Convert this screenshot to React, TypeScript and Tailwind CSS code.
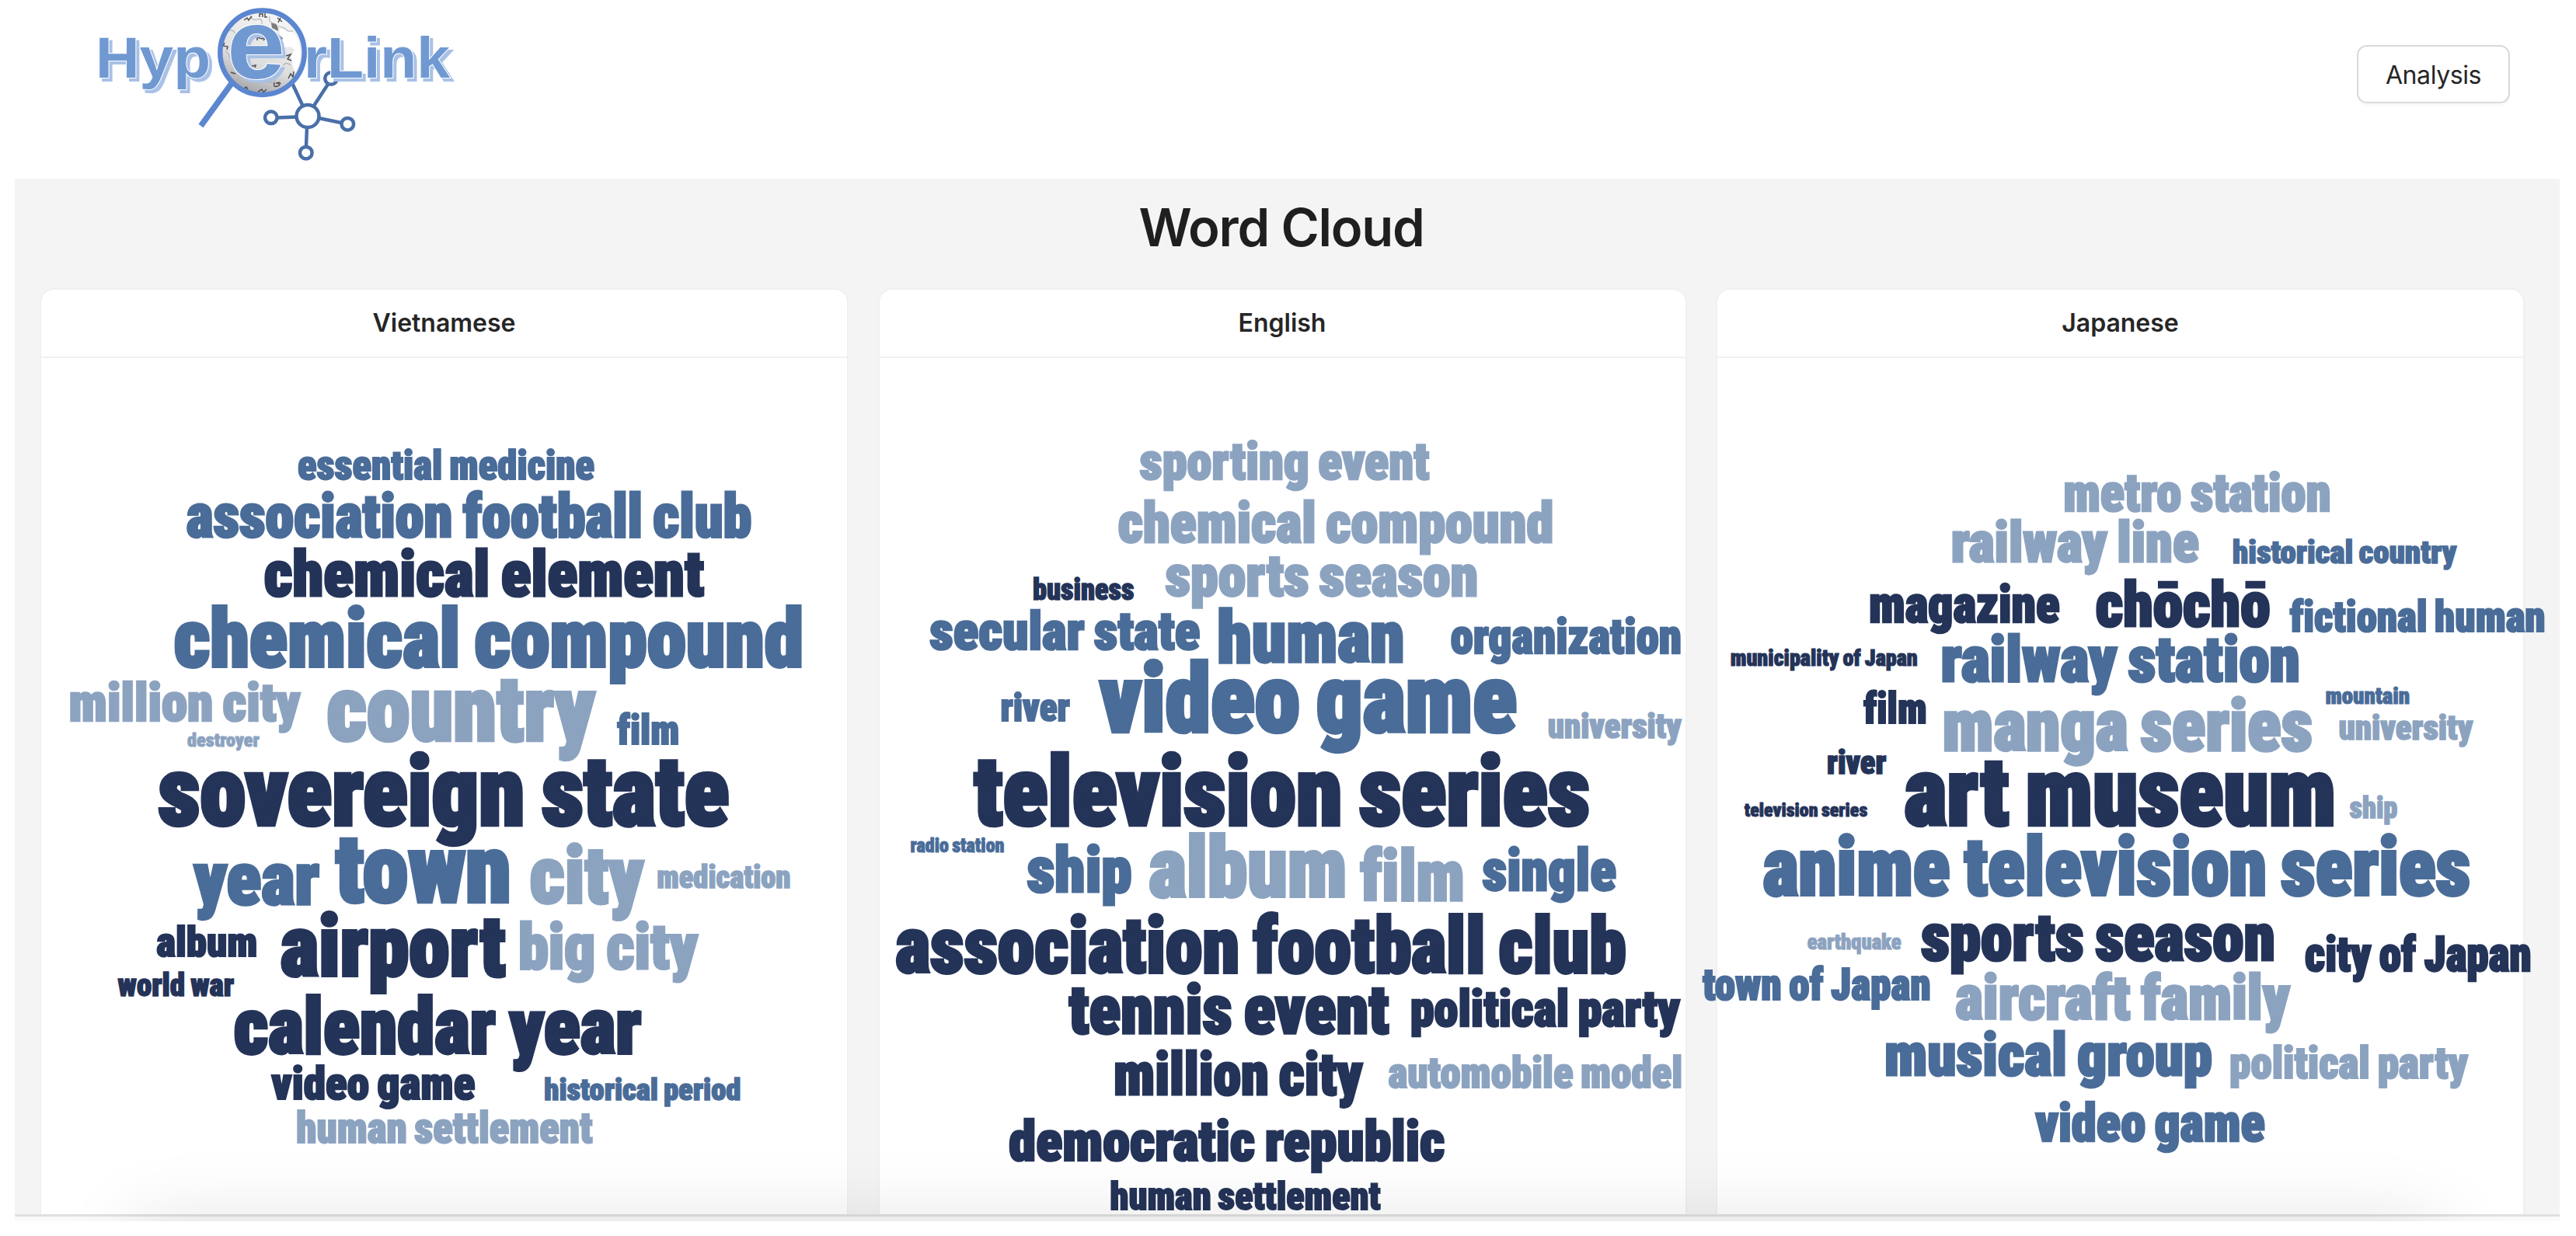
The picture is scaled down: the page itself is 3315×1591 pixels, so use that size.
type Tone = 'light' | 'mid' | 'dark';

type Word = {
  text: string;
  x: number;
  y: number;
  width: number;
  height: number;
  tone: Tone;
};

const tones: Record<Tone, string> = {
  light: '#8ca3c0',
  mid: '#4a6c98',
  dark: '#243358',
};

// [text, left, right, baseline, ascender height, tone]
type Row = [string, number, number, number, number, Tone];

const vietnamese: Row[] = [
  ['essential medicine', 383.6, 764.3, 617.1, 38, 'mid'],
  ['association football club', 240.7, 966.4, 691.7, 56.4, 'mid'],
  ['chemical element', 340.7, 905, 767.6, 59.4, 'dark'],
  ['chemical compound', 225, 1032.9, 859.5, 75.9, 'mid'],
  ['million city', 89.3, 385.7, 928.9, 50.3, 'light'],
  ['country', 422, 764.3, 954.5, 85, 'light'],
  ['film', 795, 873.6, 958.8, 39.5, 'mid'],
  ['destroyer', 241.4, 333.6, 961.4, 17.8, 'light'],
  ['sovereign state', 205, 937, 1062.8, 90.3, 'dark'],
  ['year', 250.7, 410, 1164.6, 68.5, 'mid'],
  ['town', 432.9, 656.4, 1162.6, 88.7, 'mid'],
  ['city', 682.9, 827, 1162.6, 74.4, 'light'],
  ['medication', 845.7, 1017, 1143.8, 29, 'light'],
  ['album', 202, 330.7, 1231.7, 39.7, 'dark'],
  ['airport', 362, 649.3, 1257, 80, 'dark'],
  ['big city', 667.9, 897, 1248, 60, 'light'],
  ['world war', 152, 300.7, 1282.8, 29.4, 'dark'],
  ['calendar year', 302, 824.3, 1357.2, 73.2, 'dark'],
  ['video game', 350, 610.7, 1416, 43, 'dark'],
  ['historical period', 700.7, 952.9, 1416, 28.6, 'mid'],
  ['human settlement', 382, 762, 1472, 40, 'light'],
];

const english: Row[] = [
  ['sporting event', 1466.9, 1838, 617.7, 49.3, 'light'],
  ['chemical compound', 1439, 1998, 698.3, 53, 'light'],
  ['sports season', 1500, 1900.7, 767.7, 54.2, 'light'],
  ['business', 1329, 1458.5, 772.3, 27.7, 'dark'],
  ['secular state', 1196.5, 1543, 836.7, 50.7, 'mid'],
  ['human', 1567, 1806, 853, 67.7, 'mid'],
  ['organization', 1867, 2162.8, 841.7, 46, 'mid'],
  ['video game', 1416, 1950, 943.3, 89.3, 'mid'],
  ['river', 1287.5, 1375.8, 929, 36.7, 'mid'],
  ['university', 1991.7, 2162.8, 950, 33, 'light'],
  ['television series', 1254, 2044, 1063, 90.7, 'dark'],
  ['radio station', 1171.4, 1291.7, 1097.6, 18.2, 'mid'],
  ['ship', 1322, 1455, 1148.5, 60, 'mid'],
  ['album', 1479, 1731.7, 1155.5, 78.3, 'light'],
  ['film', 1751, 1883, 1160.2, 66, 'light'],
  ['single', 1908, 2078.6, 1146.7, 54, 'mid'],
  ['association football club', 1153, 2091, 1252.7, 73.2, 'dark'],
  ['tennis event', 1375.8, 1786, 1331, 63.7, 'dark'],
  ['political party', 1815, 2160.7, 1321.9, 47.7, 'dark'],
  ['million city', 1433.5, 1752, 1410, 55.7, 'dark'],
  ['automobile model', 1786.7, 2164, 1401, 40.5, 'light'],
  ['democratic republic', 1298.7, 1858, 1495.2, 52.8, 'dark'],
  ['human settlement', 1428.7, 1775.5, 1557.5, 36, 'dark'],
];

const japanese: Row[] = [
  ['metro station', 2656, 2998.7, 659, 49.7, 'light'],
  ['railway line', 2511.5, 2829, 723.7, 53, 'light'],
  ['historical country', 2873.4, 3160.8, 725.7, 30.3, 'mid'],
  ['magazine', 2405.8, 2649.8, 802, 49.3, 'dark'],
  ['chōchō', 2697.6, 2920.5, 806.7, 58, 'dark'],
  ['fictional human', 2947.3, 3275, 813.7, 40.3, 'mid'],
  ['railway station', 2498.5, 2958.9, 878.3, 60, 'mid'],
  ['municipality of Japan', 2227, 2467.4, 857.7, 21.7, 'dark'],
  ['film', 2399, 2479, 931.3, 40.3, 'dark'],
  ['manga series', 2500.7, 2974.8, 966.7, 68.3, 'light'],
  ['mountain', 2992.9, 3100.7, 906, 22, 'mid'],
  ['university', 3010, 3181.8, 952.3, 33, 'light'],
  ['river', 2351.6, 2426.8, 996.3, 31.3, 'dark'],
  ['art museum', 2452, 3004.5, 1063.2, 89, 'dark'],
  ['television series', 2245, 2403, 1051.3, 18, 'dark'],
  ['ship', 3024, 3084.8, 1053.7, 27.7, 'light'],
  ['anime television series', 2269.8, 3178, 1153.5, 75.5, 'mid'],
  ['sports season', 2473, 2927, 1236.8, 62, 'dark'],
  ['city of Japan', 2966.8, 3257, 1250.5, 45.7, 'dark'],
  ['earthquake', 2326, 2446.4, 1222.7, 20.4, 'light'],
  ['town of Japan', 2191.6, 2484, 1287.4, 41.8, 'mid'],
  ['aircraft family', 2517.3, 2945.8, 1312.7, 58.7, 'light'],
  ['musical group', 2426, 2846, 1384.3, 55.8, 'mid'],
  ['political party', 2869.8, 3175.3, 1389, 42.2, 'light'],
  ['video game', 2620, 2914, 1470, 50, 'mid'],
];

const toWord = ([text, left, right, y, height, tone]: Row): Word => ({
  text,
  x: left,
  y,
  width: right - left,
  height,
  tone,
});

const clouds = [
  { title: 'Vietnamese', viewBox: '53 461 1037 1102', words: vietnamese.map(toWord) },
  { title: 'English', viewBox: '1131.5 461 1037 1102', words: english.map(toWord) },
  { title: 'Japanese', viewBox: '2210 461 1037 1102', words: japanese.map(toWord) },
];

export default function App() {
  return (
    <div className="h-[1591px] w-[3315px] overflow-hidden bg-white font-['Inter',sans-serif] text-[#1f1f1f]">
      <header className="flex h-[230px] items-start justify-between pl-[120px] pr-[85px]">
        <Logo />
        <button className="mt-[58px] h-[75px] w-[197px] rounded-[13px] border-2 border-[#d9d9d9] bg-white pt-[2px] text-[32px] tracking-[-0.4px] text-[#262626] shadow-[0_4px_0_rgba(0,0,0,0.02)]">
          Analysis
        </button>
      </header>

      <main className="relative ml-[19px] mr-[21px] flex h-[1342px] flex-col bg-[#f4f4f4]">
        <h1 className="h-[141px] pr-[15px] pt-[22px] text-center text-[67px] font-semibold leading-[82px] tracking-[-1.3px]">
          Word Cloud
        </h1>
        <div className="flex flex-1 gap-[37.5px] pl-8">
          {clouds.map((cloud) => (
            <CloudCard key={cloud.title} {...cloud} />
          ))}
        </div>
        <div className="h-[9px] border-t-[3px] border-[#e0e0e0] bg-[#fafafa]" />

        {/* soft shadow rising from the bottom edge */}
        <div className="pointer-events-none absolute inset-0 overflow-hidden">
          <div className="absolute left-[150px] right-[150px] top-full h-40 shadow-[0_0_100px_rgba(0,0,0,0.11)]" />
        </div>
      </main>
    </div>
  );
}

function CloudCard({ title, viewBox, words }: { title: string; viewBox: string; words: Word[] }) {
  return (
    <section className="flex w-[1041px] flex-col rounded-t-[18px] border-2 border-b-0 border-[#f0f0f0] bg-white">
      <h2 className="h-[88px] border-b-2 border-[#f0f0f0] text-center text-[32px] font-semibold leading-[85px] text-[#262626]">
        {title}
      </h2>
      <svg
        viewBox={viewBox}
        className="h-[1102px] w-full overflow-visible font-['Roboto_Condensed','Roboto',sans-serif] font-black [font-variant-ligatures:none]"
      >
        {words.map((w) => {
          const size = w.height * 1.37;
          return (
            <text
              key={w.text}
              x={w.x - size * 0.012}
              y={w.y - size * 0.01}
              textLength={w.width + size * 0.024}
              lengthAdjust="spacingAndGlyphs"
              fontSize={size}
              fill={tones[w.tone]}
              stroke={tones[w.tone]}
              strokeWidth={size * 0.038}
              wordSpacing={-size * 0.05}
            >
              {w.text}
            </text>
          );
        })}
      </svg>
    </section>
  );
}

function LogoText({ x, y = 100, size, width, children }: { x: number; y?: number; size: number; width: number; children: string }) {
  return (
    <text
      x={x}
      y={y}
      fontSize={size}
      textLength={width}
      lengthAdjust="spacingAndGlyphs"
      fill="#7099d2"
      stroke="#fff"
      strokeWidth="2"
      paintOrder="stroke"
      className="font-['Liberation_Sans',sans-serif] font-bold [filter:drop-shadow(4px_4px_0_#a9c1e6)]"
    >
      {children}
    </text>
  );
}

function Logo() {
  return (
    <svg viewBox="120 0 470 220" className="h-[220px] w-[470px]">
      <defs>
        <linearGradient id="globe" x1="0.7" y1="0.1" x2="0.35" y2="1">
          <stop offset="0" stopColor="#f4f4f4" />
          <stop offset="0.6" stopColor="#dededf" />
          <stop offset="1" stopColor="#a4a4a8" />
        </linearGradient>
      </defs>

      {/* network nodes */}
      <g fill="none" stroke="#4a6fa8" strokeWidth="4.5">
        <path d="M376 107 390 137M404 136 423 107M357 151.500 382 150.500M410 152 439 158M395 163 394 188" />
        <circle cx="396" cy="149.500" r="14.500" />
        <circle cx="348.800" cy="151.300" r="7.800" />
        <circle cx="447.300" cy="159.700" r="7.800" />
        <circle cx="393.800" cy="196.700" r="7.800" />
        <circle cx="426" cy="101" r="7.800" />
      </g>

      {/* magnifier */}
      <path d="M299 106 258.500 162" stroke="#5b86d0" strokeWidth="7.500" />
      <circle cx="337.500" cy="67.700" r="54" fill="url(#globe)" />
      <path d="M360 38c6-2 12 4 18 4 11 14 12 36 2 52-3-8-5-13-5-22l4-8-5-4-8 1-3 1c-2-7-3-12-3-19z" fill="#fff" />
      <path d="M349 30q9-2 9 10l-8-4zM359 45l5 4-2 6z" fill="#7d7d80" />
      <path
        d="M293 40q6-3 9 2t9-3M300 84q8-4 12 3t12 4 12 6 14-3M290 66q6 3 5 9M322 20q2 7 9 5t6 6M347 21q-2 8 5 9M358 34q8 1 10 4t9 2M330 108q5-6 12-3t13-2M364 84q5-5 10 0M318 48q10 3 15-3M334 73q6-5 11 1"
        fill="none"
        stroke="#b4b4b7"
        strokeWidth="1.200"
      />
      {/* marks printed on the globe pieces */}
      <g fill="none" stroke="#4f4f53" strokeWidth="1.500">
        <path d="M334 22v-4h4v4m3-5v5h3M314 26l4-3 2 3 4-5M357 23l6 5m-2-5-3 6M289 55l-2 4 6 1-1 4M331 52v-4l6 2 5-3-3 5M368 72l6-2-4 6 5 2M371 101l3-6 3 4 1-7M353 106q-2 7 4 5t-1-4q4-2 5 1M332 118l5-3 2 4 4-4M312 115l5-3 2 3M297 93l6 2M324 85l5-1-1 3" />
      </g>
      <circle cx="337.500" cy="67.700" r="54.200" fill="none" stroke="#5b86d0" strokeWidth="6.500" />

      <LogoText x={123} size={75} width={148}>Hyp</LogoText>
      <LogoText x={292} y={100.5} size={128} width={75}>e</LogoText>
      <LogoText x={391} size={75} width={188}>rLink</LogoText>
    </svg>
  );
}
